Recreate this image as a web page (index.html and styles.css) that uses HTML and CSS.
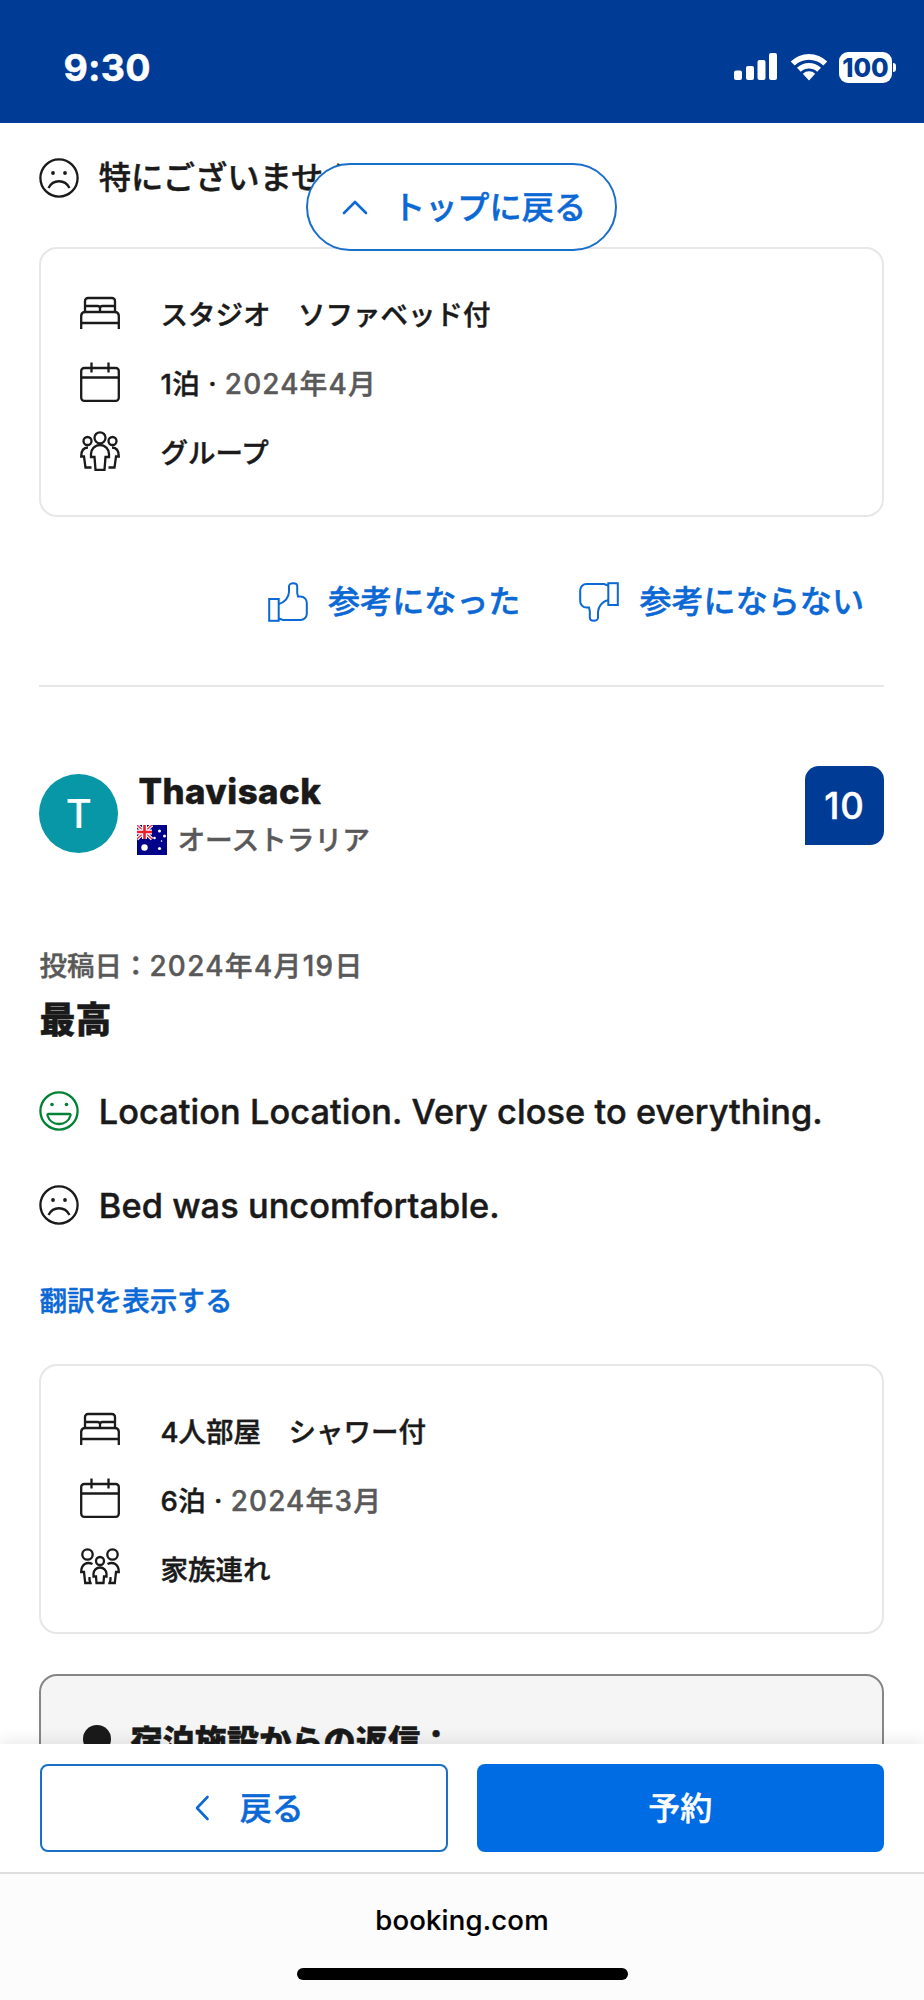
FILE: index.html
```html
<!DOCTYPE html>
<html lang="ja">
<head>
<meta charset="utf-8">
<title>クチコミ</title>
<link rel="stylesheet" href="styles.css">
</head>
<body>
<svg class="defs" aria-hidden="true">
  <symbol id="sad" viewBox="0 0 40 40"><circle cx="20" cy="20" r="18.6"/><circle class="dot" cx="14" cy="15" r="1.9"/><circle class="dot" cx="26" cy="15" r="1.9"/><path d="M9.5 30C14 21 26 21 30.500 30"/></symbol>
  <symbol id="happy" viewBox="0 0 40 40"><circle cx="20" cy="20" r="18.600"/><circle class="dot" cx="13" cy="13.500" r="1.800"/><circle class="dot" cx="27.500" cy="13.500" r="1.800"/><path d="M9.500 23H30.500Q31.800 23 31.500 24.500C30 29.500 25.500 33 20 33S10 29.500 8.500 24.500Q8.200 23 9.500 23Z"/></symbol>
  <symbol id="bed" viewBox="0 0 40 40"><path d="M1.200 36V22.500A4 4 0 0 1 5.200 19H34.800A4 4 0 0 1 38.800 22.500V36M1.200 30H38.800M5 19V8A3 3 0 0 1 8 5H32A3 3 0 0 1 35 8V19M5 13H17.500A2.500 2.500 0 0 1 20 15.500V19M35 13H22.500A2.500 2.500 0 0 0 20 15.500"/></symbol>
  <symbol id="cal" viewBox="0 0 40 40"><rect x="1.200" y="6" width="37.600" height="32.800" rx="3"/><path d="M1.200 15.500H38.800M11.500 .500V10.500M28.500 .500V10.500"/></symbol>
  <symbol id="group" viewBox="0 0 40 40"><circle cx="20" cy="6.800" r="5.500"/><circle cx="7.500" cy="10" r="4"/><circle cx="32.500" cy="10" r="4"/><path d="M15.500 38.800L14.500 26H11V23A9 9 0 0 1 29 23V26H25.500L24.500 38.800ZM8 16.500C4 16.500 1.200 19.500 1.200 25.500H4L5.500 36.500H11.500M32 16.500C36 16.500 38.800 19.500 38.800 25.500H36L34.500 36.500H28.500"/></symbol>
  <symbol id="family" viewBox="0 0 40 40"><circle cx="7.500" cy="7.500" r="5.200"/><circle cx="32.500" cy="7.500" r="5.200"/><circle cx="20" cy="14" r="4"/><path d="M12.500 17C7 14.500 1.200 17 1.200 25H4L5.200 36H10.500L9.500 33V30M27.500 17C33 14.500 38.800 17 38.800 25H36L34.800 36H29.500L30.500 33V30M16.500 36L16 29.500H13.500V27A6.500 6.500 0 0 1 26.500 27V29.500H24L23.500 36Z"/></symbol>
  <symbol id="thumb" viewBox="0 0 40 40"><rect x="1.200" y="17" width="9.500" height="21.800"/><path d="M10.700 22C17 20.500 20.800 15 21 10V4.500C21 .200 29.200 .200 29.200 4.500V11L30 14.500H32.500A6.300 6.300 0 0 1 38.800 21V32A6.300 6.300 0 0 1 32.500 38H15L10.700 36.500"/></symbol>
</svg>

<div class="phone">
  <header class="status">
    <span class="time">9:30</span>
    <div class="indicators">
      <svg class="signal" viewBox="0 0 44 28"><rect x="0" y="17.500" width="8" height="9.500" rx="2"/><rect x="12" y="13" width="8" height="14" rx="2"/><rect x="23.500" y="7" width="8" height="20" rx="2"/><rect x="35" y="0" width="8" height="27" rx="2"/></svg>
      <svg class="wifi" viewBox="0 0 38 28"><path d="M.700 8.500A26 26 0 0 1 37.300 8.500L33.300 12.600A20.500 20.500 0 0 0 4.700 12.600ZM7 14.800A17.500 17.500 0 0 1 31 14.800L27.200 18.700A12 12 0 0 0 10.800 18.700ZM12.800 20.800A9 9 0 0 1 25.200 20.800L19 27.500Z"/></svg>
      <div class="battery"><span>100</span></div>
    </div>
  </header>

  <main class="reviews">
    <p class="comment first"><svg class="icon"><use href="#sad"/></svg><span>特にございません</span></p>
    <button class="to-top"><svg class="chev-up" viewBox="0 0 26 16"><path d="M2 14L13 3L24 14"/></svg><span>トップに戻る</span></button>

    <section class="stay">
      <div class="row"><svg class="icon"><use href="#bed"/></svg><span>スタジオ　ソファベッド付</span></div>
      <div class="row"><svg class="icon"><use href="#cal"/></svg><span class="nights">1泊 · <span class="muted">2024年4月</span></span></div>
      <div class="row"><svg class="icon"><use href="#group"/></svg><span>グループ</span></div>
    </section>

    <div class="votes">
      <a class="vote"><svg class="icon"><use href="#thumb"/></svg><span>参考になった</span></a>
      <a class="vote"><svg class="icon down"><use href="#thumb"/></svg><span>参考にならない</span></a>
    </div>

    <article class="review">
      <div class="author">
        <div class="avatar">T</div>
        <div class="who">
          <div class="name">Thavisack</div>
          <div class="country">
            <svg class="flag" viewBox="0 0 30 30"><rect width="30" height="30" fill="#00008b"/><path d="M0 0L15 14M15 0L0 14" stroke="#fff" stroke-width="3.500"/><path d="M0 0L15 14M15 0L0 14" stroke="#e43b50" stroke-width="1.400"/><path d="M7.500 0V14M0 7H15" stroke="#fff" stroke-width="5"/><path d="M7.500 0V14M0 7H15" stroke="#f01c2c" stroke-width="2.600"/><g fill="#fff"><circle cx="7.500" cy="22.500" r="3.200"/><circle cx="22.500" cy="6" r="1.500"/><circle cx="17.500" cy="13" r="1.300"/><circle cx="27.500" cy="11" r="1.500"/><circle cx="24.500" cy="16" r=".8"/><circle cx="22.500" cy="23.500" r="1.600"/></g></svg>
            <span>オーストラリア</span>
          </div>
        </div>
        <div class="score">10</div>
      </div>
      <div class="date">投稿日：<span class="muted">2024年4月19日</span></div>
      <h3 class="title">最高</h3>
      <p class="comment liked"><svg class="icon good"><use href="#happy"/></svg><span class="latin">Location Location. Very close to everything.</span></p>
      <p class="comment disliked"><svg class="icon"><use href="#sad"/></svg><span class="latin">Bed was uncomfortable.</span></p>
      <a class="translate">翻訳を表示する</a>

      <section class="stay second">
        <div class="row"><svg class="icon"><use href="#bed"/></svg><span>4人部屋　シャワー付</span></div>
        <div class="row"><svg class="icon"><use href="#cal"/></svg><span class="nights">6泊 · <span class="muted">2024年3月</span></span></div>
        <div class="row"><svg class="icon"><use href="#family"/></svg><span>家族連れ</span></div>
      </section>

      <section class="reply"><span class="bullet"></span><span>宿泊施設からの返信：</span></section>
    </article>
  </main>

  <nav class="actions">
    <button class="btn back"><svg class="chev-left" viewBox="0 0 16 26"><path d="M13.500 2L3 13L13.500 24"/></svg><span>戻る</span></button>
    <button class="btn book"><span>予約</span></button>
  </nav>
  <footer class="browser">
    <span class="url">booking.com</span>
    <div class="home"></div>
  </footer>
</div>
</body>
</html>
```

FILE: styles.css
```css
* { box-sizing: border-box; margin: 0; padding: 0; }
body { background: #fff; color: #1a1a1a; font-family: Inter, "Noto Sans CJK JP", sans-serif; font-weight: 500; -webkit-text-stroke: 0.45px currentColor; }
button { font: inherit; -webkit-text-stroke: inherit; }
.defs { position: absolute; width: 0; height: 0; }
.phone { width: 924px; height: 2000px; display: flex; flex-direction: column; overflow: hidden; }

.status { height: 123px; flex: none; background: #003b95; color: #fff; display: flex; justify-content: space-between; padding: 0 28px 0 63.500px; }
.time { font-size: 37.500px; font-weight: 700; line-height: 40px; margin-top: 48px; letter-spacing: 0.2px; }
.indicators { display: flex; align-items: center; height: 30px; margin-top: 52px; fill: #fff; }
.signal { width: 44px; height: 28px; }
.wifi { width: 38px; height: 28px; margin: 0 11px 0 12px; }
.battery { position: relative; width: 53px; height: 31px; border-radius: 9px; background: #fff; color: #003b95; text-align: center; font-size: 25.500px; font-weight: 800; line-height: 31px; margin-right: 4px; -webkit-text-stroke: 0; }
.battery::after { content: ""; position: absolute; left: 54px; top: 11px; width: 3px; height: 9px; border-radius: 0 4px 4px 0; background: #fff; }

.reviews { position: relative; height: 1621px; flex: none; overflow: hidden; padding: 35px 40px 0 39.4px; }
.icon { width: 40px; height: 40px; flex: none; fill: none; stroke: currentColor; stroke-width: 2.300; }
.dot { fill: currentColor; stroke: none; }
.comment { display: flex; align-items: center; height: 40px; gap: 20px; font-size: 32.300px; line-height: 40px; margin-left: -0.6px; }
.to-top { position: absolute; left: 306px; top: 40px; width: 311px; height: 88px; border: 2px solid #1a6fc9; border-radius: 44px; background: #fff; color: #0b68d4; display: flex; align-items: center; padding-left: 34px; gap: 25px; font-size: 32.200px; }
.to-top span { padding-bottom: 5px; }
.chev-up { width: 26px; height: 16px; }
.chev-up path, .chev-left path { fill: none; stroke: currentColor; stroke-width: 2.600; stroke-linecap: round; stroke-linejoin: round; }

.stay { margin-top: 49px; height: 270px; border: 2px solid #e7e7e7; border-radius: 18px; padding: 30px 39px; font-size: 27.500px; }
.row { display: flex; align-items: center; height: 69px; gap: 40px; }
.row .icon { margin-top: -2px; }
.row > span { padding-bottom: 1px; }
.nights { letter-spacing: 0.500px; }
.muted { color: #595959; font-size: 27.800px; letter-spacing: 1.200px; }

.votes { display: flex; justify-content: flex-end; gap: 59px; padding: 65px 20px 0 0; height: 170px; border-bottom: 2px solid #e7e7e7; color: #0b68d4; font-size: 32.100px; }
.vote { display: flex; align-items: center; height: 40px; gap: 20px; }
.vote span { padding-bottom: 6px; }
.vote .icon { stroke-width: 2; }
.down { transform: rotate(180deg); }

.author { display: flex; padding-top: 79px; height: 168px; }
.avatar { width: 79px; height: 79px; margin-top: 8px; border-radius: 50%; background: #0897a7; color: #fff; font-size: 40px; text-align: center; line-height: 79px; -webkit-text-stroke: 0; }
.who { flex: 1; padding-left: 20px; }
.name { font-size: 34.800px; font-weight: 800; line-height: 50px; letter-spacing: 0.5px; }
.country { display: flex; align-items: center; gap: 10px; margin-left: -1px; height: 30px; margin-top: 9px; font-size: 27.700px; color: #595959; }
.country span { padding-bottom: 4px; }
.flag { width: 30px; height: 30px; }
.score { width: 79px; height: 79px; border-radius: 14px 14px 14px 0; background: #003b95; color: #fff; font-size: 36.500px; text-align: center; line-height: 81px; letter-spacing: 1px; }
.date { margin-top: 91px; height: 40px; line-height: 40px; font-size: 27.500px; color: #595959; }
.date .muted { letter-spacing: 1.350px; }
.title { height: 50px; margin-top: 9px; font-size: 36px; line-height: 50px; font-weight: 800; }
.liked { margin-top: 46px; }
.disliked { margin-top: 54px; }
.good { color: #008234; }
.latin { font-size: 34.300px; letter-spacing: 0.08px; padding-top: 2px; }
.translate { display: block; margin-top: 56px; height: 40px; line-height: 40px; font-size: 27.600px; color: #0b68d4; }
.second { margin-top: 43px; padding-top: 29px; }
.second .row > span { padding-bottom: 0; }
.reply { display: flex; align-items: center; margin-top: 40px; height: 130px; border: 2px solid #868686; border-radius: 18px; background: #f5f5f5; padding: 0 0 1px 42px; gap: 19px; font-size: 32.200px; font-weight: 800; }
.bullet { width: 28px; height: 28px; border-radius: 50%; background: #1a1a1a; }

.actions { position: relative; height: 128px; flex: none; background: #fff; box-shadow: 0 -2px 16px rgba(0,0,0,.1); display: grid; grid-template-columns: 1fr 1fr; gap: 29px; padding: 20px 40px 0; }
.btn { height: 88px; border-radius: 8px; font-size: 32px; display: flex; align-items: center; justify-content: center; }
.btn span { padding-bottom: 4px; }
.back { gap: 30px; border: 2px solid #1a6fc9; background: #fff; color: #0b68d4; padding-left: 10px; }
.chev-left { width: 16px; height: 26px; }
.book { border: 0; background: #006ce4; color: #fff; }
.browser { position: relative; flex: 1; border-top: 2px solid #dedede; background: #fcfcfd; display: flex; flex-direction: column; align-items: center; color: #000; }
.url { font-size: 27.500px; line-height: 40px; margin-top: 26px; letter-spacing: 0.2px; -webkit-text-stroke: 0.2px; }
.home { width: 331px; height: 12px; border-radius: 6px; background: #000; margin-top: 28px; }
```
